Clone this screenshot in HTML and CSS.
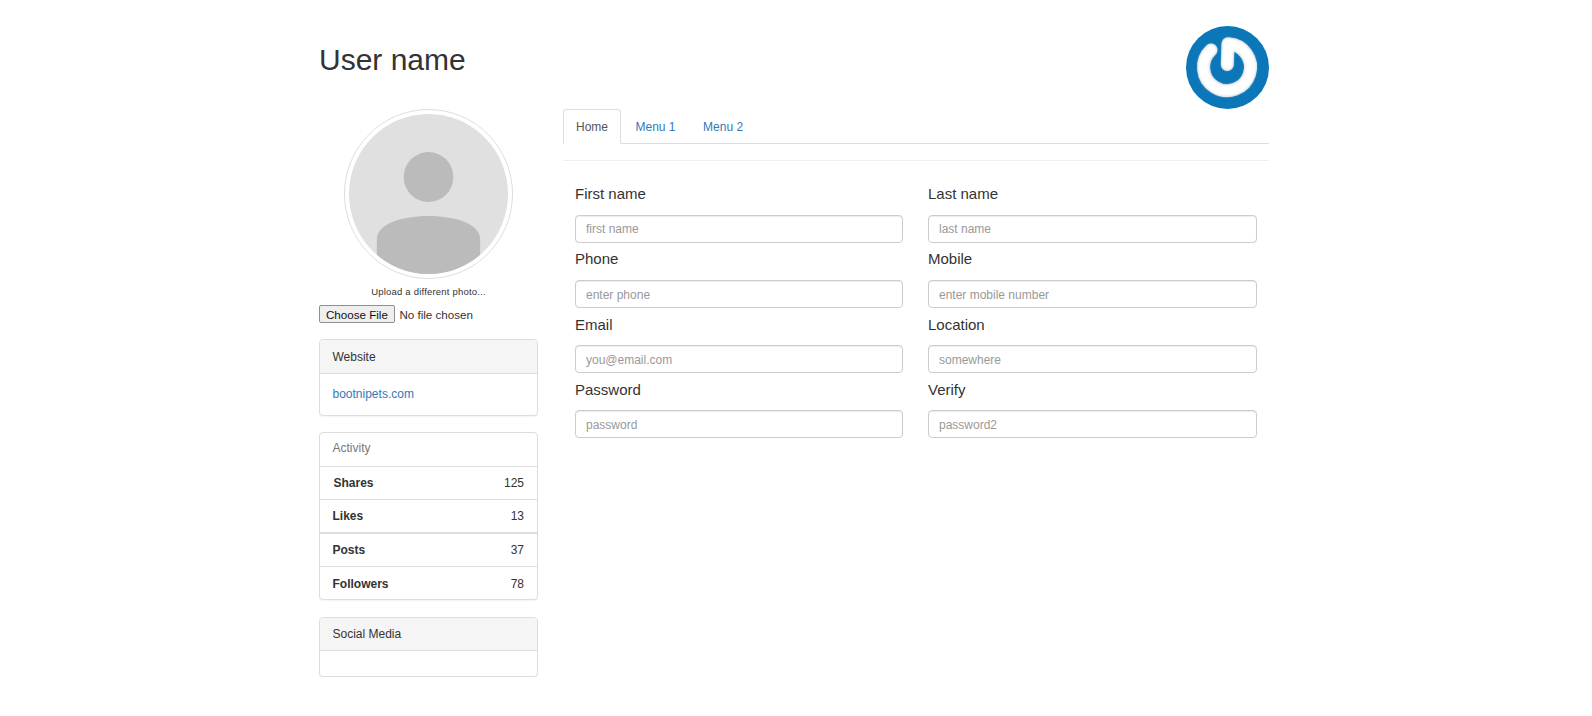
FILE: index.html
```html
<!DOCTYPE html>
<html lang="en">
<head>
<meta charset="utf-8">
<title>User name</title>
<link rel="stylesheet" href="styles.css">
</head>
<body>
<div class="container">
  <header class="page-head">
    <h1>User name</h1>
    <svg class="logo" width="83" height="83" viewBox="0 0 83 83" aria-label="logo">
      <defs>
        <filter id="soft" x="-20%" y="-20%" width="140%" height="140%"><feGaussianBlur stdDeviation="0.8"/></filter>
      </defs>
      <circle cx="41.5" cy="41.5" r="41.5" fill="#0b76b8"/>
      <path d="M25 24 A23.5 23.5 0 1 0 42 17.7 L41.3 38.5" fill="none" stroke="#d5dade" stroke-width="13" stroke-linecap="round" stroke-linejoin="round"/>
      <path d="M25 24 A23.5 23.5 0 1 0 42 17.7 L41.3 38.5" fill="none" stroke="#ffffff" stroke-width="11" stroke-linecap="round" stroke-linejoin="round" filter="url(#soft)"/>
    </svg>
  </header>
  <div class="layout">
    <aside class="sidebar">
      <div class="avatar-wrap">
        <svg class="avatar" width="169" height="170" viewBox="0 0 170 170" preserveAspectRatio="none" aria-label="avatar">
          <defs><clipPath id="disc"><circle cx="85" cy="85" r="80"/></clipPath></defs>
          <circle cx="85" cy="85" r="84.5" fill="#fff" stroke="#ddd"/>
          <circle cx="85" cy="85" r="80" fill="#e0e0e0"/>
          <circle cx="85" cy="68" r="25" fill="#bbb"/>
          <path clip-path="url(#disc)" d="M33 170 V130 C33 116 56 107 85 107 C114 107 137 116 137 130 V170 Z" fill="#bbb"/>
        </svg>
      </div>
      <p class="upload-note">Upload a different photo...</p>
      <input class="file-input" type="file">
      <section class="panel">
        <div class="panel-head">Website</div>
        <div class="panel-body"><a href="#">bootnipets.com</a></div>
      </section>
      <section class="panel">
        <div class="list-row list-title">Activity</div>
        <div class="list-row"><strong class="nudge">Shares</strong><span>125</span></div>
        <div class="list-row"><strong>Likes</strong><span>13</span></div>
        <div class="list-row list-row-thick"><strong>Posts</strong><span>37</span></div>
        <div class="list-row list-row-low"><strong>Followers</strong><span>78</span></div>
      </section>
      <section class="panel">
        <div class="panel-head panel-head-tight">Social Media</div>
        <div class="panel-empty"></div>
      </section>
    </aside>
    <main class="content">
      <nav class="tabs">
        <a class="tab active" href="#">Home</a>
        <a class="tab" href="#">Menu 1</a>
        <a class="tab" href="#">Menu 2</a>
      </nav>
      <hr class="rule">
      <form class="form-grid">
        <div class="field"><label>First name</label><input type="text" placeholder="first name"></div>
        <div class="field"><label>Last name</label><input type="text" placeholder="last name"></div>
        <div class="field"><label>Phone</label><input type="text" placeholder="enter phone"></div>
        <div class="field"><label>Mobile</label><input type="text" placeholder="enter mobile number"></div>
        <div class="field"><label>Email</label><input type="text" placeholder="you@email.com"></div>
        <div class="field"><label>Location</label><input type="text" placeholder="somewhere"></div>
        <div class="field"><label>Password</label><input type="text" placeholder="password"></div>
        <div class="field"><label>Verify</label><input type="text" placeholder="password2"></div>
      </form>
    </main>
  </div>
</div>
</body>
</html>
```
FILE: styles.css
```css
* { box-sizing: border-box; }
html, body { margin: 0; padding: 0; background: #fff; }
body {
  font-family: "Liberation Sans", Arial, sans-serif;
  font-size: 12px;
  line-height: 17px;
  color: #333;
}
a { color: #337ab7; text-decoration: none; }

.container { width: 954px; margin: 0 auto; padding: 26px 4px 0 0; }

.page-head { display: flex; justify-content: space-between; align-items: flex-start; }
.page-head h1 { margin: 14px 0 0; font-size: 30px; line-height: 40px; font-weight: 400; color: #333; }
.logo { display: block; }

.layout { display: flex; gap: 25px; align-items: flex-start; }
.sidebar { flex: 0 0 219px; }
.content { flex: 1 1 auto; min-width: 0; }

.avatar-wrap { display: flex; justify-content: center; }
.avatar { display: block; }
.upload-note { margin: 7px 0 7px; text-align: center; font-size: 9.5px; line-height: 12px; letter-spacing: 0.2px; }
.file-input { display: block; width: 100%; height: 18px; font: 11.6px/18px "Liberation Sans", Arial, sans-serif; color: #333; }
.file-input::file-selector-button { height: 18px; padding: 0 6px; margin-right: 4.5px; background: #efefef; border: 1px solid #8f8f8f; border-radius: 2px; color: #111; }

.panel { margin-top: 16px; border: 1px solid #ddd; border-radius: 4px; background: #fff; box-shadow: 0 1px 1px rgba(0,0,0,.05); }
.panel + .panel { margin-top: 16px; }
.panel + .panel + .panel { margin-top: 17px; }
.panel-head { height: 34px; padding: 9px 12.5px 0; background: #f5f5f5; border-bottom: 1px solid #ddd; border-radius: 3px 3px 0 0; }
.panel-head-tight { height: 33px; padding-top: 8px; }
.panel-body { height: 41px; padding: 12px 12.5px 0; }
.panel-empty { height: 25px; }

.list-row { display: flex; justify-content: space-between; height: 33px; padding: 8px 13px 0 12.5px; border-top: 1px solid #ddd; }
.list-row:first-child { border-top: 0; }
.list-row-thick { border-top-width: 2px; height: 34px; }
.list-row-low { padding-top: 9px; }
.list-title { color: #777; padding-top: 7px; }
.nudge { padding-left: 1px; }

.tabs { display: flex; height: 35px; border-bottom: 1px solid #ddd; }
.tab { height: 35px; padding: 9px 12px; margin-right: 1.5px; border: 1px solid transparent; border-radius: 4px 4px 0 0; }
.tab.active { color: #555; background: #fff; border-color: #ddd #ddd #fff; }

.rule { height: 1px; margin: 16px 0 0; border: 0; background: #eee; }

.form-grid { display: grid; grid-template-columns: 328px 329px; column-gap: 25px; padding: 16.25px 0 0 12px; }
.field label { display: block; padding-top: 4.9px; margin-bottom: 9.4px; font-size: 15px; line-height: 23px; color: #333; }
.field input {
  display: block; width: 100%; height: 28px; padding: 5.4px 10px 4px;
  font: 12px/18px "Liberation Sans", Arial, sans-serif; color: #555;
  background: #fff; border: 1px solid #ccc; border-radius: 4px;
  box-shadow: inset 0 1px 1px rgba(0,0,0,.075);
}
.field input::placeholder { color: #999; opacity: 1; }
```
